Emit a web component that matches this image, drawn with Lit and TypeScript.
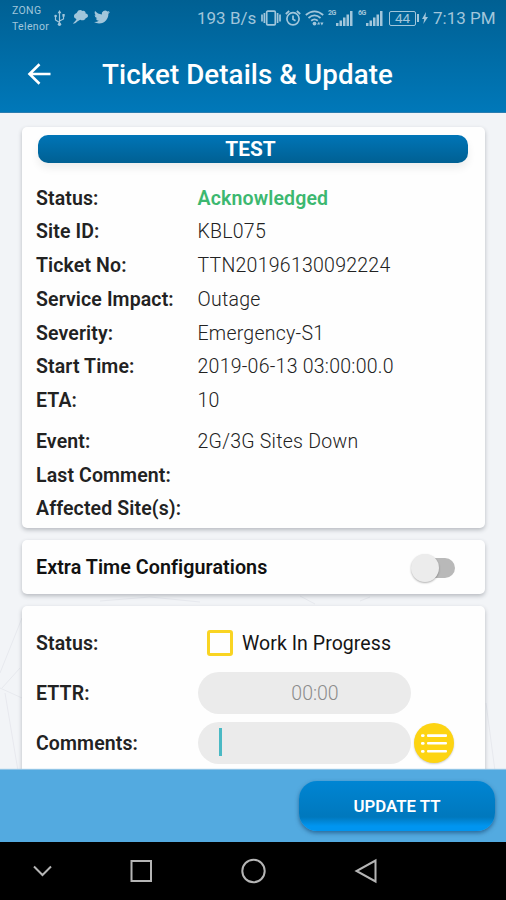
import { LitElement, html, css, svg } from "lit";
import { customElement, property } from "lit/decorators.js";

const usb = svg`<path d="M5.5 16V3M5.5 13.5L1.5 11V7.5M5.5 12L9.5 10V6.5" fill="none" stroke="currentColor" stroke-width="1.2"/><path d="M5.5 1L7.4 4.3H3.6Z" fill="currentColor"/><circle cx="1.6" cy="7" r="1.3" fill="currentColor"/><rect x="8.4" y="5" width="2.3" height="2.6" fill="currentColor"/><circle cx="5.5" cy="15.3" r="1.7" fill="currentColor"/>`;
const thought = svg`<path d="M5 3.500C6 .6 9 .3 10.300 2C12.500 1.300 14 3 13.600 4.600C16.800 5 16.800 9 13.600 9.200C13 11.400 10 11.900 8.400 10.700C6.500 12 4.600 11.600 4 9.800C1.300 9 1.400 5 4 4.500Z" fill="currentColor"/><path d="M5.500 9.500L.8 14.800L3.200 14.200L7.500 10.800Z" fill="currentColor"/>`;
const bird = svg`<path d="M23.950 4.570a10 10 0 0 1-2.820.77 4.960 4.960 0 0 0 2.160-2.720c-.95.550-2 .95-3.130 1.180a4.920 4.920 0 0 0-8.380 4.480C7.690 8.090 4.070 6.130 1.640 3.160a4.820 4.820 0 0 0-.67 2.480c0 1.710.87 3.210 2.190 4.100a4.900 4.900 0 0 1-2.230-.62v.06a4.920 4.920 0 0 0 3.950 4.830 5 5 0 0 1-2.210.08 4.940 4.940 0 0 0 4.600 3.420A9.870 9.870 0 0 1 0 19.540a14 14 0 0 0 7.550 2.210c9.050 0 14-7.500 14-13.980 0-.21 0-.42-.02-.63a9.940 9.940 0 0 0 2.460-2.550z" fill="currentColor"/>`;
const vibrate = svg`<g fill="none" stroke="currentColor" stroke-width="1.700"><rect x="5.700" y="1.200" width="8.600" height="13.600" rx="1"/><path d="M3.400 3v10M1 4.500v7M16.600 3v10M19 4.500v7"/></g>`;
const alarm = svg`<g fill="none" stroke="currentColor" stroke-width="1.700"><circle cx="8" cy="8.800" r="6.100"/><path d="M8 5.500V9.300L10.500 10.800M.8 4L4.200 1M15.200 4L11.800 1"/></g>`;
const wifi = svg`<g fill="none" stroke="currentColor" stroke-width="1.800"><path d="M.8 5Q9.500-2.200 18.200 5M3.500 8Q9.500 2.800 15.500 8M6.200 10.800Q9.500 8 12.800 10.800"/></g><circle cx="9.500" cy="13.600" r="1.900" fill="currentColor"/><path d="M12 14.500l2-3 1 3zM15.200 12.500h3.300l-1.600 3z" fill="currentColor"/>`;
const bars = svg`<path d="M0 12h2.500v3H0zM3.500 9.500H6V15H3.500zM7 6.500h2.500V15H7zM10.500 3.500H13V15h-2.500zM14 0h2.500v15H14z" fill="currentColor"/>`;
const bolt = svg`<path d="M4 1L0 8h2.200L1.300 13 6 6H3.500Z" fill="currentColor"/>`;
const back = svg`<path d="M24.500 11H3.500M13.500 1.200L3.500 11L13.500 20.800" fill="none" stroke="currentColor" stroke-width="2.600"/>`;
const list = svg`<g fill="currentColor"><rect x="0" y=".3" width="3.600" height="2.800" rx="1.300"/><rect x="0" y="8" width="3.600" height="2.800" rx="1.300"/><rect x="0" y="16" width="3.600" height="2.800" rx="1.300"/><rect x="6" y=".3" width="20" height="2.600" rx="1"/><rect x="6" y="8" width="20" height="2.600" rx="1"/><rect x="6" y="16" width="20" height="2.600" rx="1"/></g>`;

const icon = (w: number, h: number, body: unknown, box = `0 0 ${w} ${h}`) =>
  html`<svg width=${w} height=${h} viewBox=${box}>${body}</svg>`;

@customElement("status-bar")
class StatusBar extends LitElement {
  static styles = css`
    :host { display: flex; height: 37px; padding: 0 10px 0 12px; color: #a1c6db; box-sizing: border-box; }
    svg { display: block; flex: none; }
    .carrier { width: 40px; font-size: 10.500px; line-height: 15.500px; padding-top: 3px; letter-spacing: 0.35px; }
    .left { display: flex; gap: 5px; padding-top: 9px; margin-left: 2px; }
    .left svg:first-child { margin-right: 2px; }
    .right { display: flex; margin-left: auto; align-items: center; height: 36px; }
    .txt { line-height: 36px; white-space: nowrap; }
    .speed { width: 59px; font-size: 17px; }
    .time { width: 63px; font-size: 17px; }
    .net { width: 8px; font-size: 7px; font-weight: 700; line-height: 8px; letter-spacing: -0.5px; align-self: flex-start; margin-top: 9px; }
    .battery { box-sizing: border-box; width: 27px; height: 15px; border: 1px solid currentColor; border-radius: 2px; font-size: 13.500px; line-height: 13.500px; text-align: center; }
    .tip { width: 2px; height: 8px; margin-left: 1px; background: currentColor; }
    .g4 { margin-left: 4px; } .g5 { margin-left: 5px; } .g6 { margin-left: 6px; } .g3 { margin-left: 3px; }
  `;
  render() {
    return html`
      <div class="carrier">ZONG<br />Telenor</div>
      <div class="left">${icon(11, 17, usb)}${icon(17, 16, thought)}${icon(16, 16, bird, "0 1 24 22")}</div>
      <div class="right">
        <span class="txt speed">193 B/s</span>
        <span class="g5">${icon(20, 16, vibrate)}</span>
        <span class="g4">${icon(16, 16, alarm)}</span>
        <span class="g4">${icon(19, 16, wifi)}</span>
        <span class="net g4">2G</span>${icon(17, 15, bars)}
        <span class="net g5">6G</span>${icon(17, 15, bars)}
        <span class="battery g6">44</span><span class="tip"></span>
        <span class="g3">${icon(6, 14, bolt)}</span>
        <span class="txt time g5">7:13 PM</span>
      </div>`;
  }
}

@customElement("detail-row")
class DetailRow extends LitElement {
  @property() label = "";
  @property() value = "";
  @property({ type: Boolean }) good = false;
  static styles = css`
    :host { display: flex; height: 33.770px; line-height: 33.770px; font-size: 19.500px; }
    .label { width: 161.500px; font-weight: 600; color: #222; white-space: nowrap; letter-spacing: 0.12px; }
    .value { color: #222; font-weight: 350; white-space: nowrap; letter-spacing: 0.25px; }
    .good { color: #3cb870; font-weight: 600; letter-spacing: 0.15px; }
  `;
  render() {
    return html`<span class="label">${this.label}</span><span class="value ${this.good ? "good" : ""}">${this.value}</span>`;
  }
}

@customElement("app-root")
class AppRoot extends LitElement {
  static styles = css`
    :host { display: flex; flex-direction: column; height: 900px; overflow: hidden; background: #f2f4f7; font-family: Roboto, "Liberation Sans", sans-serif; }
    svg { display: block; }
    .head { flex: none; height: 113px; background: linear-gradient(#006093, #0078b9); border-bottom: 1px solid #2b7db0; box-sizing: border-box; }
    .bar { display: flex; align-items: center; height: 74px; padding-left: 26px; color: #fff; }
    .title { margin-left: 50px; padding-top: 1px; font-size: 27.700px; font-weight: 500; letter-spacing: 0.1px; white-space: nowrap; }
    .main { position: relative; flex: 1; min-height: 0; overflow: hidden; padding: 14px 21px 0 22px; display: flex; flex-direction: column; gap: 12px; }
    .mesh { position: absolute; left: 0; top: 0; }
    .card { position: relative; flex: none; box-sizing: border-box; background: #fefefe; border-radius: 5px; box-shadow: 0 2px 4px rgba(60, 65, 75, 0.32); padding: 0 14px; }
    .info { height: 401px; padding-top: 8px; }
    .pill { margin: 0 3px 0 2px; height: 28px; border-radius: 10px; background: linear-gradient(#0075b7, #006093); color: #fff; font-size: 20.800px; font-weight: 700; line-height: 28.500px; text-align: center; box-shadow: 0 5px 8px rgba(0, 0, 0, 0.07); padding-right: 5px; box-sizing: border-box; }
    .rows { padding-top: 18.500px; }
    .late { margin-top: 7px; }
    .extra { height: 54px; display: flex; align-items: center; justify-content: space-between; padding: 1px 30px 0 14px; font-size: 19.700px; font-weight: 600; letter-spacing: 0.06px; color: #111; }
    .switch { width: 45px; height: 30px; display: flex; align-items: center; }
    .track { margin-left: 12px; width: 33px; height: 20px; border-radius: 10px; background: #b9b9b9; }
    .knob { position: absolute; margin-left: 1px; width: 28px; height: 28px; border-radius: 50%; background: #ececec; box-shadow: 0 1px 2px rgba(0, 0, 0, 0.3); }
    .form { height: 172px; padding-top: 12px; font-size: 19.500px; }
    .line { display: flex; align-items: center; height: 50px; }
    .line .name { width: 161.500px; flex: none; font-weight: 600; color: #222; letter-spacing: 0.12px; padding-top: 1px; }
    .box { width: 26px; height: 26px; box-sizing: border-box; border: 3px solid #f9d423; border-radius: 3px; margin: 0 9px 0 9.500px; }
    .work { color: #151515; letter-spacing: 0.06px; padding-top: 1px; }
    .input { width: 213px; height: 42px; border-radius: 21px; background: #ebebeb; color: #8c8c8c; font-weight: 350; display: flex; align-items: center; justify-content: center; padding: 1px 0 0 22px; box-sizing: border-box; }
    .typing { justify-content: flex-start; padding-top: 0; }
    .caret { width: 3px; height: 28px; background: #4ab9c4; margin: -2px 0 0 -1px; }
    .list { width: 40px; height: 40px; margin-left: 3px; border-radius: 50%; background: #fdd412; color: #fff; display: flex; align-items: center; justify-content: center; box-shadow: 0 1px 2px rgba(0, 0, 0, 0.2); }
    .foot { position: relative; flex: none; height: 72px; background: #53aae0; box-shadow: 0 -1px 1px #8fc4e6; display: flex; justify-content: flex-end; box-sizing: border-box; padding: 11px 11px 0 0; }
    .update { width: 196px; height: 50px; border-radius: 18px; background: linear-gradient(#0085d3, #0078bd 72%, #0095f0 90%, #0095f0); box-shadow: 0 2px 4px rgba(0, 40, 80, 0.5); color: #fff; font-size: 16.800px; font-weight: 600; line-height: 51px; text-align: center; }
    .nav { flex: none; height: 58px; background: #000; color: #b5b5b5; }
  `;
  render() {
    return html`
      <div class="head">
        <status-bar></status-bar>
        <div class="bar">${icon(26, 22, back)}<span class="title">Ticket Details &amp; Update</span></div>
      </div>
      <div class="main">
        <svg class="mesh" width="506" height="658" viewBox="0 0 506 658">
          <path d="M0 560L22 505M0 575L22 585M2 575L20 555M5 580L18 658M100 488L150 484L200 489M300 483L315 491M360 488L370 484M486 590L495 658" fill="none" stroke="#e7e9ee" stroke-width="1" />
        </svg>
        <div class="card info">
          <div class="pill">TEST</div>
          <div class="rows">
            <detail-row label="Status:" value="Acknowledged" good></detail-row>
            <detail-row label="Site ID:" value="KBL075"></detail-row>
            <detail-row label="Ticket No:" value="TTN20196130092224"></detail-row>
            <detail-row label="Service Impact:" value="Outage"></detail-row>
            <detail-row label="Severity:" value="Emergency-S1"></detail-row>
            <detail-row label="Start Time:" value="2019-06-13 03:00:00.0"></detail-row>
            <detail-row label="ETA:" value="10"></detail-row>
            <detail-row class="late" label="Event:" value="2G/3G Sites Down"></detail-row>
            <detail-row label="Last Comment:"></detail-row>
            <detail-row label="Affected Site(s):"></detail-row>
          </div>
        </div>
        <div class="card extra">
          <span>Extra Time Configurations</span>
          <span class="switch"><span class="track"></span><span class="knob"></span></span>
        </div>
        <div class="card form">
          <div class="line"><span class="name">Status:</span><span class="box"></span><span class="work">Work In Progress</span></div>
          <div class="line"><span class="name">ETTR:</span><span class="input">00:00</span></div>
          <div class="line"><span class="name">Comments:</span><span class="input typing"><span class="caret"></span></span><span class="list">${icon(26, 19, list)}</span></div>
        </div>
      </div>
      <div class="foot"><div class="update">UPDATE TT</div></div>
      <div class="nav">
        <svg width="506" height="58" viewBox="0 0 506 58" fill="none" stroke="currentColor" stroke-width="2">
          <path d="M34 24.500L42.500 33L51 24.500" />
          <rect x="131.500" y="19" width="19.500" height="20" />
          <circle cx="253.500" cy="29" r="11.200" />
          <path d="M375.500 18.500V39.500L356.500 29Z" />
        </svg>
      </div>`;
  }
}
